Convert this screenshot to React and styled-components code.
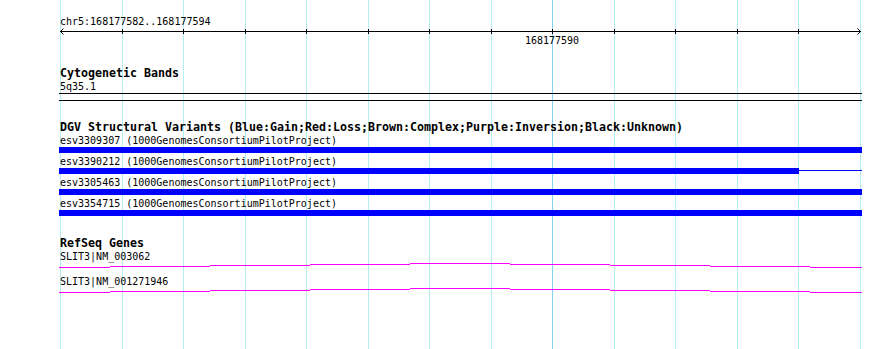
import React from 'react';
import styled, { createGlobalStyle } from 'styled-components';

const GlobalStyle = createGlobalStyle`
  html, body {
    margin: 0;
    padding: 0;
    background: #ffffff;
  }
  body {
    font-family: "DejaVu Sans Mono", "Liberation Mono", monospace;
    color: #000000;
  }
`;

// x of every base boundary in the 13 bp window, and the one labelled tick
const GRID_X = [60, 122, 183, 245, 306, 368, 429, 491, 552, 614, 675, 737, 798, 860];
const MAJOR_X = 552;
const LEFT = 59;
const TRACK_W = 803;

const variants = [
  { id: 'esv3309307', width: TRACK_W },
  { id: 'esv3390212', width: 740 },
  { id: 'esv3305463', width: TRACK_W },
  { id: 'esv3354715', width: TRACK_W },
];

const genes = ['SLIT3|NM_003062', 'SLIT3|NM_001271946'];

// intron connector: pieces of a shallow hat, one pixel step every 100px
const hat = [
  [0, 51, 4], [51, 151, 3], [151, 251, 2], [251, 351, 1], [351, 451, 0],
  [451, 551, 1], [551, 651, 2], [651, 751, 3], [751, 803, 4],
];

const Page = styled.div`
  position: relative;
  width: 890px;
  height: 349px;
  overflow: hidden;
  background: #ffffff;
`;

const GridLayer = styled.svg`
  position: absolute;
  left: 0;
  top: 0;
  width: 890px;
  height: 349px;
  z-index: 0;
`;

const Tracks = styled.div`
  position: relative;
  z-index: 1;
  width: ${TRACK_W}px;
  margin-left: ${LEFT}px;
  padding-top: 15px;
  display: flex;
  flex-direction: column;
`;

const Label = styled.div`
  height: 13px;
  line-height: 13px;
  padding-left: 1px;
  font-size: 10px;
  white-space: nowrap;
`;

const Title = styled(Label)`
  font-size: 11.63px;
  font-weight: bold;
`;

const Section = styled.section`
  display: flex;
  flex-direction: column;
  margin-top: ${p => p.$gap}px;
`;

const Axis = styled.svg`
  display: block;
  width: ${TRACK_W}px;
  height: 20px;
`;

const AxisText = styled.text`
  font-family: "DejaVu Sans Mono", "Liberation Mono", monospace;
  font-size: 10px;
  fill: #000000;
`;

const BandBox = styled.div`
  box-sizing: border-box;
  height: 8px;
  border-top: 1px solid #000000;
  border-bottom: 1px solid #000000;
`;

const VariantRow = styled.div`
  display: flex;
  flex-direction: column;
  height: 21px;
`;

const Bar = styled.div`
  display: flex;
  align-items: flex-start;
  height: 6px;
`;

const BarFill = styled.div`
  flex: 0 0 ${p => p.$width}px;
  height: 6px;
  background: #0000ff;
`;

const BarTail = styled.div`
  flex: 1;
  height: 1px;
  margin-top: 2px;
  background: #0000ff;
`;

const GeneRow = styled.div`
  display: flex;
  flex-direction: column;
  height: 25px;
`;

const Connector = styled.svg`
  display: block;
  width: ${TRACK_W}px;
  height: 12px;
`;

function Ruler() {
  return (
    <Section $gap={0}>
      <Label>chr5:168177582..168177594</Label>
      <Axis viewBox={`0 0 ${TRACK_W} 20`}>
        <line x1="1" y1="3.5" x2="802" y2="3.5" stroke="#000" shapeRendering="crispEdges" />
        {GRID_X.slice(1, -1).map(x => (
          <line key={x} x1={x - LEFT + 0.5} y1="1" x2={x - LEFT + 0.5} y2="6" stroke="#000" shapeRendering="crispEdges" />
        ))}
        <polyline points="4.5,0.5 1.5,3.5 4.5,6.5" fill="none" stroke="#000" />
        <polyline points="798.5,0.5 801.5,3.5 798.5,6.5" fill="none" stroke="#000" />
        <AxisText x={MAJOR_X - LEFT} y="15.5" textAnchor="middle">168177590</AxisText>
      </Axis>
    </Section>
  );
}

function App() {
  return (
    <Page>
      <GlobalStyle />
      <GridLayer viewBox="0 0 890 349">
        {GRID_X.map(x => (
          <line
            key={x}
            x1={x + 0.5}
            y1="0"
            x2={x + 0.5}
            y2="349"
            stroke={x === MAJOR_X ? '#84d2f2' : '#b2eef2'}
            shapeRendering="crispEdges"
          />
        ))}
      </GridLayer>
      <Tracks>
        <Ruler />

        <Section $gap={19}>
          <Title>Cytogenetic Bands</Title>
          <Label>5q35.1</Label>
          <BandBox />
        </Section>

        <Section $gap={20}>
          <Title>DGV Structural Variants (Blue:Gain;Red:Loss;Brown:Complex;Purple:Inversion;Black:Unknown)</Title>
          {variants.map(v => (
            <VariantRow key={v.id}>
              <Label>{v.id} (1000GenomesConsortiumPilotProject)</Label>
              <Bar>
                <BarFill $width={v.width} />
                {v.width < TRACK_W && <BarTail />}
              </Bar>
            </VariantRow>
          ))}
        </Section>

        <Section $gap={19}>
          <Title>RefSeq Genes</Title>
          {genes.map(g => (
            <GeneRow key={g}>
              <Label>{g}</Label>
              <Connector viewBox={`0 0 ${TRACK_W} 12`}>
                {hat.map(([a, b, y]) => (
                  <line key={a} x1={a} y1={y + 0.5} x2={b} y2={y + 0.5} stroke="#ff00ff" shapeRendering="crispEdges" />
                ))}
              </Connector>
            </GeneRow>
          ))}
        </Section>
      </Tracks>
    </Page>
  );
}

export default App;
